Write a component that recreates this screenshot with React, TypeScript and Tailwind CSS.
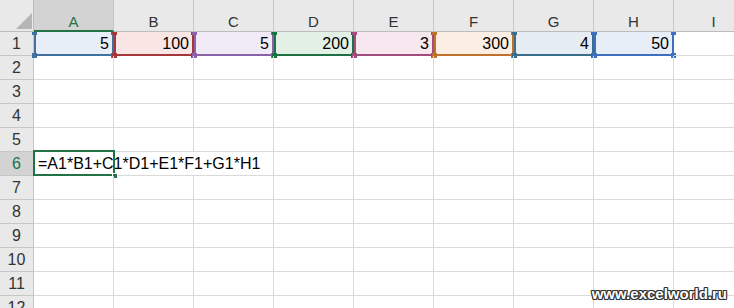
const COLS = ['A', 'B', 'C', 'D', 'E', 'F', 'G', 'H', 'I']

const RANGES = [
  { v: '5', border: 'bg-[#41719c]', fill: 'bg-[#e8eef7]' },
  { v: '100', border: 'bg-[#a5373b]', fill: 'bg-[#fbe6e6]' },
  { v: '5', border: 'bg-[#8a62a8]', fill: 'bg-[#f1ebf7]' },
  { v: '200', border: 'bg-[#1e7145]', fill: 'bg-[#e3f0e6]' },
  { v: '3', border: 'bg-[#a34d7e]', fill: 'bg-[#f7e7ef]' },
  { v: '300', border: 'bg-[#c0712d]', fill: 'bg-[#fdeee3]' },
  { v: '4', border: 'bg-[#3c6e89]', fill: 'bg-[#e6eef4]' },
  { v: '50', border: 'bg-[#3f6fbf]', fill: 'bg-[#e7eef8]' },
]

const font = "font-['Liberation_Sans',Arial,sans-serif]"

function RowHeader({ n, active }: { n: number; active?: boolean }) {
  return (
    <div
      className={`flex h-[24px] w-[34px] shrink-0 items-center justify-center border-r border-b border-[#c6c6c6] text-[16px] leading-[23px] ${
        active ? 'bg-[#d3d3d3] text-[#217346]' : 'bg-[#e9e9e9] text-[#333]'
      }`}
    >
      {n}
    </div>
  )
}

function Cell({ children }: { children?: React.ReactNode }) {
  return (
    <div className="relative h-[24px] w-[80px] shrink-0 border-r border-b border-[#dadada]">{children}</div>
  )
}

function RangeCell({ v, border, fill }: { v: string; border: string; fill: string }) {
  return (
    <div className={`relative h-[24px] w-[80px] shrink-0 border-r border-b border-[#dadada] ${fill}`}>
      <div className="pr-[4px] text-right text-[16px] leading-[23px] text-black">{v}</div>
      <span className={`absolute top-0 left-0 h-[24px] w-[2px] ${border}`} />
      <span className={`absolute top-0 left-[78px] h-[24px] w-[2px] ${border}`} />
      <span className={`absolute top-[22px] left-0 h-[2px] w-[80px] ${border}`} />
      <span className={`absolute top-[-2px] left-[-2px] h-[5px] w-[5px] ${border}`} />
      <span className={`absolute top-[-2px] left-[77px] h-[5px] w-[5px] ${border}`} />
      <span className={`absolute top-[21px] left-[-2px] h-[5px] w-[5px] ${border}`} />
      <span className={`absolute top-[21px] left-[77px] h-[5px] w-[5px] ${border}`} />
    </div>
  )
}

export default function App() {
  const rows = Array.from({ length: 12 }, (_, i) => i + 1)

  return (
    <div className={`relative h-[308px] w-[734px] overflow-hidden bg-white ${font}`}>
      <div className="relative z-10 flex h-[32px]">
        <div className="relative h-[32px] w-[34px] shrink-0 border-r border-b border-[#bdbdbd] bg-[#e9e9e9]">
          <svg className="absolute top-[13px] left-[16px]" width="16" height="16" viewBox="0 0 16 16">
            <polygon points="16,0 16,16 0,16" fill="#b5b5b5" />
          </svg>
        </div>
        {COLS.map((c, i) => (
          <div
            key={c}
            className={`flex h-[32px] w-[80px] shrink-0 items-end justify-center border-r border-[#c6c6c6] text-[15px] leading-none ${
              i === 0
                ? 'border-b-2 border-b-[#217346] bg-[#d3d3d3] pb-[1px] text-[#217346]'
                : 'border-b border-b-[#bdbdbd] bg-[#e9e9e9] pb-[2px] text-[#333]'
            }`}
          >
            {c}
          </div>
        ))}
      </div>

      {rows.map((n) => {
        if (n === 1) {
          return (
            <div key={n} className="flex">
              <RowHeader n={n} />
              {RANGES.map((r, i) => (
                <RangeCell key={i} {...r} />
              ))}
              <Cell />
            </div>
          )
        }
        if (n === 6) {
          return (
            <div key={n} className="flex">
              <RowHeader n={n} active />
              <div className="relative h-[24px] w-[240px] shrink-0 border-r border-b border-[#dadada]">
                <div className="pl-[4px] text-[16px] leading-[23px] whitespace-nowrap text-black">
                  =A1*B1+C1*D1+E1*F1+G1*H1
                </div>
                <div className="absolute top-[-2px] left-[-1px] h-[26px] w-[82px] border-2 border-[#217346]" />
                <div className="absolute top-[21px] left-[78px] h-[6px] w-[6px] border border-white bg-[#217346]" />
              </div>
              {COLS.slice(3).map((c) => (
                <Cell key={c} />
              ))}
            </div>
          )
        }
        return (
          <div key={n} className="flex">
            <RowHeader n={n} />
            {COLS.map((c) => (
              <Cell key={c} />
            ))}
          </div>
        )
      })}

      <div className="absolute right-[7px] bottom-[7px] z-20 text-[15px] leading-none font-bold text-white [text-shadow:1px_0_0_#333,-1px_0_0_#333,0_1px_0_#333,0_-1px_0_#333,1px_1px_0_#333,-1px_-1px_0_#333,1px_-1px_0_#333,-1px_1px_0_#333]">
        www.excelworld.ru
      </div>
    </div>
  )
}
